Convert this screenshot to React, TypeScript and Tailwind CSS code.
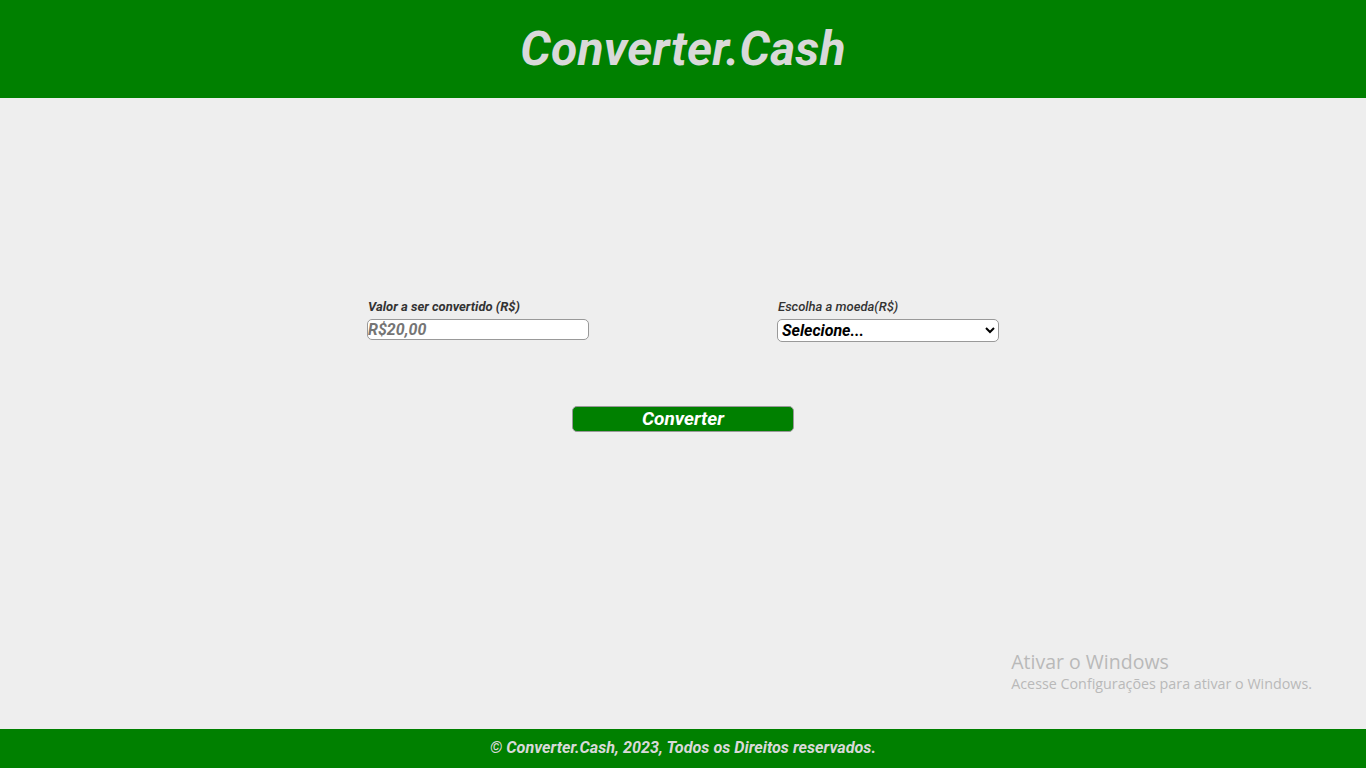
import React from "react";

export default function App() {
  const font = { fontFamily: "Roboto, 'Liberation Sans', sans-serif" };
  return (
    <div className="flex h-[768px] flex-col bg-[#eeeeee] italic" style={font}>
      <header className="flex h-[98px] shrink-0 items-center justify-center bg-[#008000]">
        <h1 className="text-[48px] font-bold italic tracking-[0.2px] text-[#d9d9d9]">Converter.Cash</h1>
      </header>
      <main className="relative flex flex-1 flex-col items-center">
        <div className="mt-[201px] flex gap-[188px]">
          <div className="flex w-[222px] flex-col">
            <label className="pl-[1px] text-[13px] font-bold leading-[16px] text-[#333333]">Valor a ser convertido (R$)</label>
            <input
              type="text"
              placeholder="R$20,00"
              className="mt-[4px] h-[21px] w-[222px] rounded-[5px] border border-[#999999] bg-white px-0 text-[16px] font-bold italic text-black placeholder:text-[#757575] outline-none"
            />
          </div>
          <div className="flex w-[222px] flex-col">
            <label className="pl-[1px] text-[13px] font-medium leading-[16px] text-[#333333]">Escolha a moeda(R$)</label>
            <select className="mt-[4px] h-[23px] w-[222px] rounded-[5px] border border-[#999999] bg-white pl-0 text-[16px] font-bold italic text-black outline-none">
              <option>Selecione...</option>
            </select>
          </div>
        </div>
        <button className="mt-[64px] h-[26px] w-[222px] rounded-[5px] border border-[#999999] bg-[#008000] text-[19px] font-bold italic leading-[24px] text-white">
          Converter
        </button>
        <div className="absolute right-[54px] top-[552px] not-italic text-[#b9b9b9]" style={{ fontFamily: "'Open Sans', 'Noto Sans', sans-serif" }}>
          <div className="text-[19.5px] leading-[24px]">Ativar o Windows</div>
          <div className="text-[14.3px] leading-[20px]">Acesse Configurações para ativar o Windows.</div>
        </div>
      </main>
      <footer className="flex h-[39px] shrink-0 items-center justify-center bg-[#008000]">
        <p className="text-[16.2px] font-bold italic text-[#d9d9d9]">© Converter.Cash, 2023, Todos os Direitos reservados.</p>
      </footer>
    </div>
  );
}
